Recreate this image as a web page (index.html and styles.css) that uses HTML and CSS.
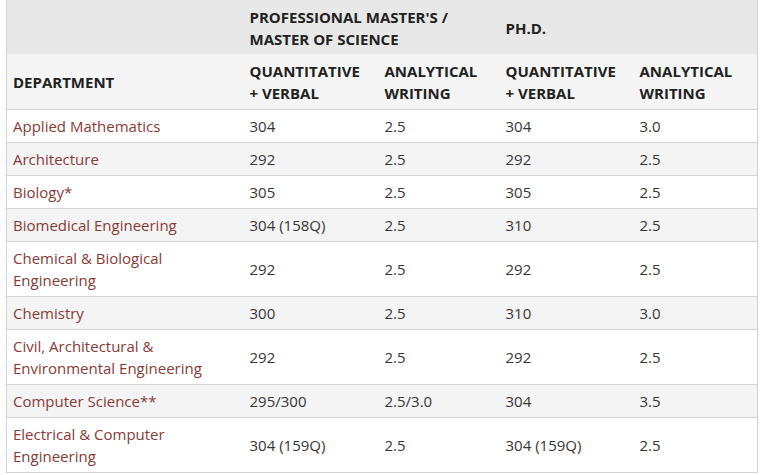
FILE: index.html
```html
<!DOCTYPE html>
<html>
<head>
<meta charset="utf-8">
<link rel="stylesheet" href="styles.css">
</head>
<body>
<table class="gre">
  <colgroup>
    <col class="c1"><col class="c2"><col class="c3"><col class="c4"><col class="c5">
  </colgroup>
  <thead>
    <tr class="h1">
      <th></th>
      <th colspan="2">PROFESSIONAL MASTER'S /<br>MASTER OF SCIENCE</th>
      <th colspan="2">PH.D.</th>
    </tr>
    <tr class="h2">
      <th>DEPARTMENT</th>
      <th>QUANTITATIVE<br>+ VERBAL</th>
      <th>ANALYTICAL<br>WRITING</th>
      <th>QUANTITATIVE<br>+ VERBAL</th>
      <th>ANALYTICAL<br>WRITING</th>
    </tr>
  </thead>
  <tbody>
    <tr><td class="dept">Applied Mathematics</td><td>304</td><td>2.5</td><td>304</td><td>3.0</td></tr>
    <tr><td class="dept">Architecture</td><td>292</td><td>2.5</td><td>292</td><td>2.5</td></tr>
    <tr><td class="dept">Biology*</td><td>305</td><td>2.5</td><td>305</td><td>2.5</td></tr>
    <tr><td class="dept">Biomedical Engineering</td><td>304 (158Q)</td><td>2.5</td><td>310</td><td>2.5</td></tr>
    <tr><td class="dept">Chemical &amp; Biological<br>Engineering</td><td>292</td><td>2.5</td><td>292</td><td>2.5</td></tr>
    <tr><td class="dept">Chemistry</td><td>300</td><td>2.5</td><td>310</td><td>3.0</td></tr>
    <tr><td class="dept">Civil, Architectural &amp;<br>Environmental Engineering</td><td>292</td><td>2.5</td><td>292</td><td>2.5</td></tr>
    <tr><td class="dept">Computer Science**</td><td>295/300</td><td>2.5/3.0</td><td>304</td><td>3.5</td></tr>
    <tr><td class="dept">Electrical &amp; Computer<br>Engineering</td><td>304 (159Q)</td><td>2.5</td><td>304 (159Q)</td><td>2.5</td></tr>
  </tbody>
</table>
</body>
</html>
```
FILE: styles.css
```css
html, body {
  margin: 0;
  padding: 0;
  background: #ffffff;
}
body {
  padding-left: 6px;
  font-family: "Open Sans", "Liberation Sans", sans-serif;
  color: #333333;
}
.gre {
  border-collapse: collapse;
  width: 751px;
  table-layout: fixed;
  border-left: 1px solid #d4d4d4;
  border-right: 1px solid #d4d4d4;
}
.c1 { width: 237px; }
.c2 { width: 135px; }
.c3 { width: 121px; }
.c4 { width: 134px; }
.c5 { width: 124px; }
.gre th,
.gre td {
  padding: 5px 7px 5px 6px;
  line-height: 22px;
  text-align: left;
  vertical-align: middle;
  border-bottom: 1px solid #d4d4d4;
}
.gre th {
  font-size: 15px;
  font-weight: 700;
  color: #222222;
  padding-top: 6px;
  padding-bottom: 4px;
}
.h1 th {
  background: #e8e8e8;
  border-bottom: none;
}
.h2 th {
  background: #f5f5f5;
  padding-bottom: 5px;
}
.gre td {
  font-size: 15px;
  color: #363636;
}
.gre td.dept {
  color: #8a3a36;
}
.gre tbody tr:nth-child(even) td {
  background: #f4f4f4;
}
.gre tbody tr:nth-child(odd) td {
  background: #ffffff;
}
```
